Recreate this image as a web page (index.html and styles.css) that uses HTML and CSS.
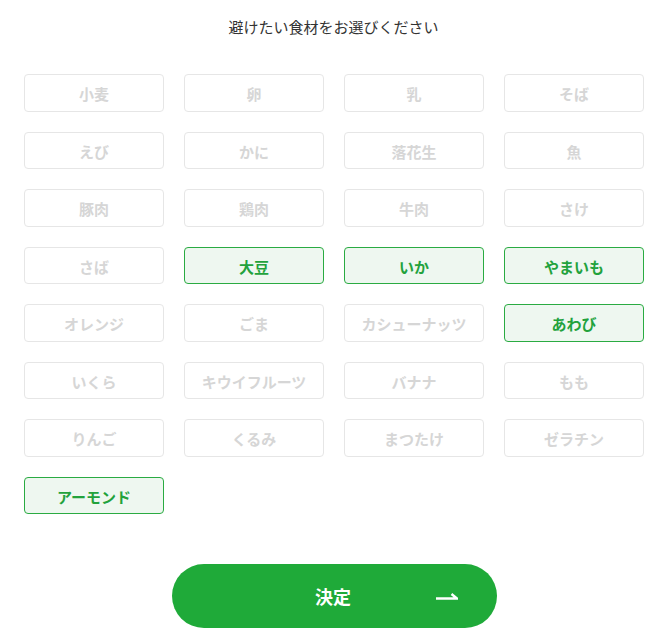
FILE: index.html
```html
<!DOCTYPE html>
<html lang="ja">
<head>
<meta charset="utf-8">
<link rel="stylesheet" href="styles.css">
</head>
<body>
<main class="page">
  <h1 class="title">避けたい食材をお選びください</h1>
  <div class="grid">
    <button class="chip">小麦</button>
    <button class="chip">卵</button>
    <button class="chip">乳</button>
    <button class="chip">そば</button>
    <button class="chip">えび</button>
    <button class="chip">かに</button>
    <button class="chip">落花生</button>
    <button class="chip">魚</button>
    <button class="chip">豚肉</button>
    <button class="chip">鶏肉</button>
    <button class="chip">牛肉</button>
    <button class="chip">さけ</button>
    <button class="chip">さば</button>
    <button class="chip is-selected">大豆</button>
    <button class="chip is-selected">いか</button>
    <button class="chip is-selected">やまいも</button>
    <button class="chip">オレンジ</button>
    <button class="chip">ごま</button>
    <button class="chip">カシューナッツ</button>
    <button class="chip is-selected">あわび</button>
    <button class="chip">いくら</button>
    <button class="chip">キウイフルーツ</button>
    <button class="chip">バナナ</button>
    <button class="chip">もも</button>
    <button class="chip">りんご</button>
    <button class="chip">くるみ</button>
    <button class="chip">まつたけ</button>
    <button class="chip">ゼラチン</button>
    <button class="chip is-selected">アーモンド</button>
  </div>
  <div class="actions">
    <button class="submit">
      <span class="submit-label">決定</span>
      <svg class="submit-arrow" width="22" height="8" viewBox="0 0 22 8" aria-hidden="true">
        <path d="M0 5.5 H21 L15.5 1" fill="none" stroke="#fff" stroke-width="2.4" stroke-linejoin="miter"/>
      </svg>
    </button>
  </div>
</main>
</body>
</html>
```

FILE: styles.css
```css
* { box-sizing: border-box; }
html, body { margin: 0; padding: 0; background: #fff; }
body {
  font-family: "Noto Sans CJK JP", "Noto Sans", sans-serif;
  color: #333;
}
.page {
  width: 671px;
  padding: 17px 0 0 0;
}
.title {
  margin: 0;
  padding-right: 4px;
  font-size: 15px;
  line-height: 20px;
  font-weight: 400;
  text-align: center;
  color: #333;
}
.grid {
  margin: 37px 0 0 24px;
  display: grid;
  grid-template-columns: repeat(4, 140px);
  grid-auto-rows: 37.5px;
  column-gap: 20px;
  row-gap: 20px;
}
.chip {
  font-family: inherit;
  font-size: 15px;
  font-weight: 700;
  line-height: 1;
  color: #d6d6d6;
  background: #fff;
  border: 1px solid #e6e6e6;
  border-radius: 4px;
  padding: 2px 0 0 0;
  margin: 0;
  display: flex;
  align-items: center;
  justify-content: center;
}
.chip.is-selected {
  color: #22a23c;
  background: #eef7f0;
  border-color: #2aab42;
}
.actions {
  margin-top: 49.5px;
  display: flex;
  justify-content: center;
  padding-right: 2px;
}
.submit {
  position: relative;
  width: 325px;
  height: 64px;
  border: none;
  border-radius: 32px;
  background: #1faa39;
  color: #fff;
  font-family: inherit;
  font-size: 18px;
  font-weight: 700;
  display: flex;
  align-items: center;
  justify-content: center;
  padding: 0;
}
.submit-label { line-height: 1; padding: 1px 3px 0 0; }
.submit-arrow {
  position: absolute;
  right: 39px;
  top: 29px;
}
```
